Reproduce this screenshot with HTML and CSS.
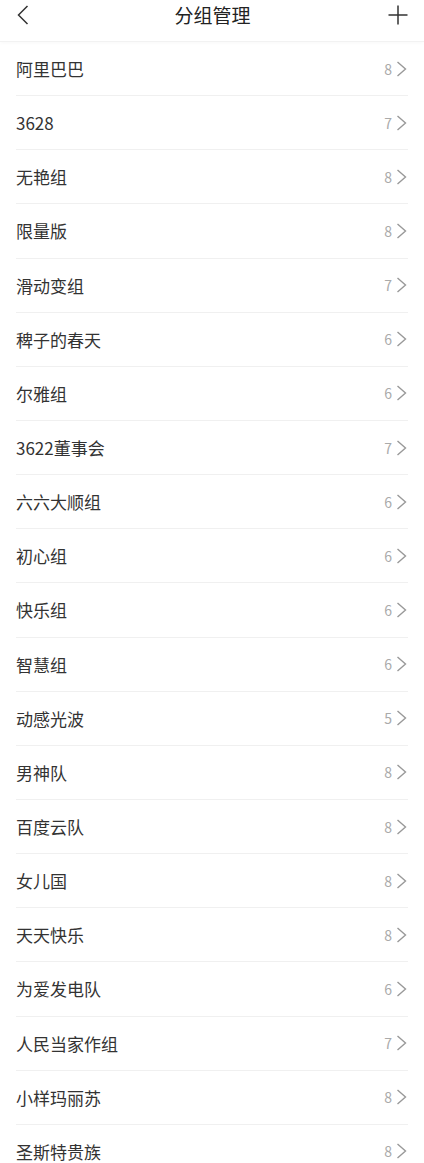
FILE: index.html
```html
<!DOCTYPE html>
<html lang="zh">
<head>
  <meta charset="UTF-8" />
  <meta name="viewport" content="width=device-width, initial-scale=1.0"/>
  <title>分组管理</title>
  <link rel="stylesheet" href="styles.css">
</head>
<body>
  <div class="header">
    <span class="back">
      <svg width="12" height="20" viewBox="0 0 12 20"><path d="M10.5 1 L1.5 10 L10.5 19" fill="none" stroke="#333" stroke-width="1.5"/></svg>
    </span>
    <h1 class="title">分组管理</h1>
    <span class="add">
      <svg width="20" height="20" viewBox="0 0 20 20"><path d="M10 0.5 V19.5 M0.5 10 H19.5" fill="none" stroke="#333" stroke-width="1.5"/></svg>
    </span>
  </div>

  <ul class="group-list">
    <li class="group-item"><span class="name">阿里巴巴</span><span class="count">8</span><svg class="arrow" width="11" height="16" viewBox="0 0 11 16"><path d="M1.5 1 L9.5 8 L1.5 15" fill="none" stroke="#999" stroke-width="1.4"/></svg></li>
    <li class="group-item"><span class="name">3628</span><span class="count">7</span><svg class="arrow" width="11" height="16" viewBox="0 0 11 16"><path d="M1.5 1 L9.5 8 L1.5 15" fill="none" stroke="#999" stroke-width="1.4"/></svg></li>
    <li class="group-item"><span class="name">无艳组</span><span class="count">8</span><svg class="arrow" width="11" height="16" viewBox="0 0 11 16"><path d="M1.5 1 L9.5 8 L1.5 15" fill="none" stroke="#999" stroke-width="1.4"/></svg></li>
    <li class="group-item"><span class="name">限量版</span><span class="count">8</span><svg class="arrow" width="11" height="16" viewBox="0 0 11 16"><path d="M1.5 1 L9.5 8 L1.5 15" fill="none" stroke="#999" stroke-width="1.4"/></svg></li>
    <li class="group-item"><span class="name">滑动变组</span><span class="count">7</span><svg class="arrow" width="11" height="16" viewBox="0 0 11 16"><path d="M1.5 1 L9.5 8 L1.5 15" fill="none" stroke="#999" stroke-width="1.4"/></svg></li>
    <li class="group-item"><span class="name">稗子的春天</span><span class="count">6</span><svg class="arrow" width="11" height="16" viewBox="0 0 11 16"><path d="M1.5 1 L9.5 8 L1.5 15" fill="none" stroke="#999" stroke-width="1.4"/></svg></li>
    <li class="group-item"><span class="name">尔雅组</span><span class="count">6</span><svg class="arrow" width="11" height="16" viewBox="0 0 11 16"><path d="M1.5 1 L9.5 8 L1.5 15" fill="none" stroke="#999" stroke-width="1.4"/></svg></li>
    <li class="group-item"><span class="name">3622董事会</span><span class="count">7</span><svg class="arrow" width="11" height="16" viewBox="0 0 11 16"><path d="M1.5 1 L9.5 8 L1.5 15" fill="none" stroke="#999" stroke-width="1.4"/></svg></li>
    <li class="group-item"><span class="name">六六大顺组</span><span class="count">6</span><svg class="arrow" width="11" height="16" viewBox="0 0 11 16"><path d="M1.5 1 L9.5 8 L1.5 15" fill="none" stroke="#999" stroke-width="1.4"/></svg></li>
    <li class="group-item"><span class="name">初心组</span><span class="count">6</span><svg class="arrow" width="11" height="16" viewBox="0 0 11 16"><path d="M1.5 1 L9.5 8 L1.5 15" fill="none" stroke="#999" stroke-width="1.4"/></svg></li>
    <li class="group-item"><span class="name">快乐组</span><span class="count">6</span><svg class="arrow" width="11" height="16" viewBox="0 0 11 16"><path d="M1.5 1 L9.5 8 L1.5 15" fill="none" stroke="#999" stroke-width="1.4"/></svg></li>
    <li class="group-item"><span class="name">智慧组</span><span class="count">6</span><svg class="arrow" width="11" height="16" viewBox="0 0 11 16"><path d="M1.5 1 L9.5 8 L1.5 15" fill="none" stroke="#999" stroke-width="1.4"/></svg></li>
    <li class="group-item"><span class="name">动感光波</span><span class="count">5</span><svg class="arrow" width="11" height="16" viewBox="0 0 11 16"><path d="M1.5 1 L9.5 8 L1.5 15" fill="none" stroke="#999" stroke-width="1.4"/></svg></li>
    <li class="group-item"><span class="name">男神队</span><span class="count">8</span><svg class="arrow" width="11" height="16" viewBox="0 0 11 16"><path d="M1.5 1 L9.5 8 L1.5 15" fill="none" stroke="#999" stroke-width="1.4"/></svg></li>
    <li class="group-item"><span class="name">百度云队</span><span class="count">8</span><svg class="arrow" width="11" height="16" viewBox="0 0 11 16"><path d="M1.5 1 L9.5 8 L1.5 15" fill="none" stroke="#999" stroke-width="1.4"/></svg></li>
    <li class="group-item"><span class="name">女儿国</span><span class="count">8</span><svg class="arrow" width="11" height="16" viewBox="0 0 11 16"><path d="M1.5 1 L9.5 8 L1.5 15" fill="none" stroke="#999" stroke-width="1.4"/></svg></li>
    <li class="group-item"><span class="name">天天快乐</span><span class="count">8</span><svg class="arrow" width="11" height="16" viewBox="0 0 11 16"><path d="M1.5 1 L9.5 8 L1.5 15" fill="none" stroke="#999" stroke-width="1.4"/></svg></li>
    <li class="group-item"><span class="name">为爱发电队</span><span class="count">6</span><svg class="arrow" width="11" height="16" viewBox="0 0 11 16"><path d="M1.5 1 L9.5 8 L1.5 15" fill="none" stroke="#999" stroke-width="1.4"/></svg></li>
    <li class="group-item"><span class="name">人民当家作组</span><span class="count">7</span><svg class="arrow" width="11" height="16" viewBox="0 0 11 16"><path d="M1.5 1 L9.5 8 L1.5 15" fill="none" stroke="#999" stroke-width="1.4"/></svg></li>
    <li class="group-item"><span class="name">小样玛丽苏</span><span class="count">8</span><svg class="arrow" width="11" height="16" viewBox="0 0 11 16"><path d="M1.5 1 L9.5 8 L1.5 15" fill="none" stroke="#999" stroke-width="1.4"/></svg></li>
    <li class="group-item"><span class="name">圣斯特贵族</span><span class="count">8</span><svg class="arrow" width="11" height="16" viewBox="0 0 11 16"><path d="M1.5 1 L9.5 8 L1.5 15" fill="none" stroke="#999" stroke-width="1.4"/></svg></li>
  </ul>
</body>
</html>
```

FILE: styles.css
```css
body {
  margin: 0;
  background: #fff;
  color: #333;
  font-family: "Noto Sans CJK SC", "Noto Sans", sans-serif;
  overflow: hidden;
}
.header {
  box-sizing: border-box;
  height: 42px;
  padding: 5px 16px 0 17px;
  border-bottom: 1px solid #f2f2f2;
  box-shadow: 0 1px 4px rgba(0, 0, 0, 0.03);
  display: flex;
  align-items: flex-start;
  justify-content: space-between;
}
.back, .add {
  display: flex;
  width: 20px;
}
.add {
  justify-content: flex-end;
}
.title {
  margin: 0;
  font-size: 19px;
  line-height: 20px;
  font-weight: 400;
  color: #222;
}
.group-list {
  list-style: none;
  margin: 0;
  padding: 0 16px;
}
.group-item {
  box-sizing: border-box;
  height: 54.15px;
  border-bottom: 1px solid #f0f0f0;
  display: flex;
  align-items: center;
}
.name {
  flex: 1;
  font-size: 17px;
  color: #333;
}
.count {
  font-size: 14px;
  color: #aaa;
  margin-right: 4px;
}
.arrow {
  margin-right: 1px;
}
```
